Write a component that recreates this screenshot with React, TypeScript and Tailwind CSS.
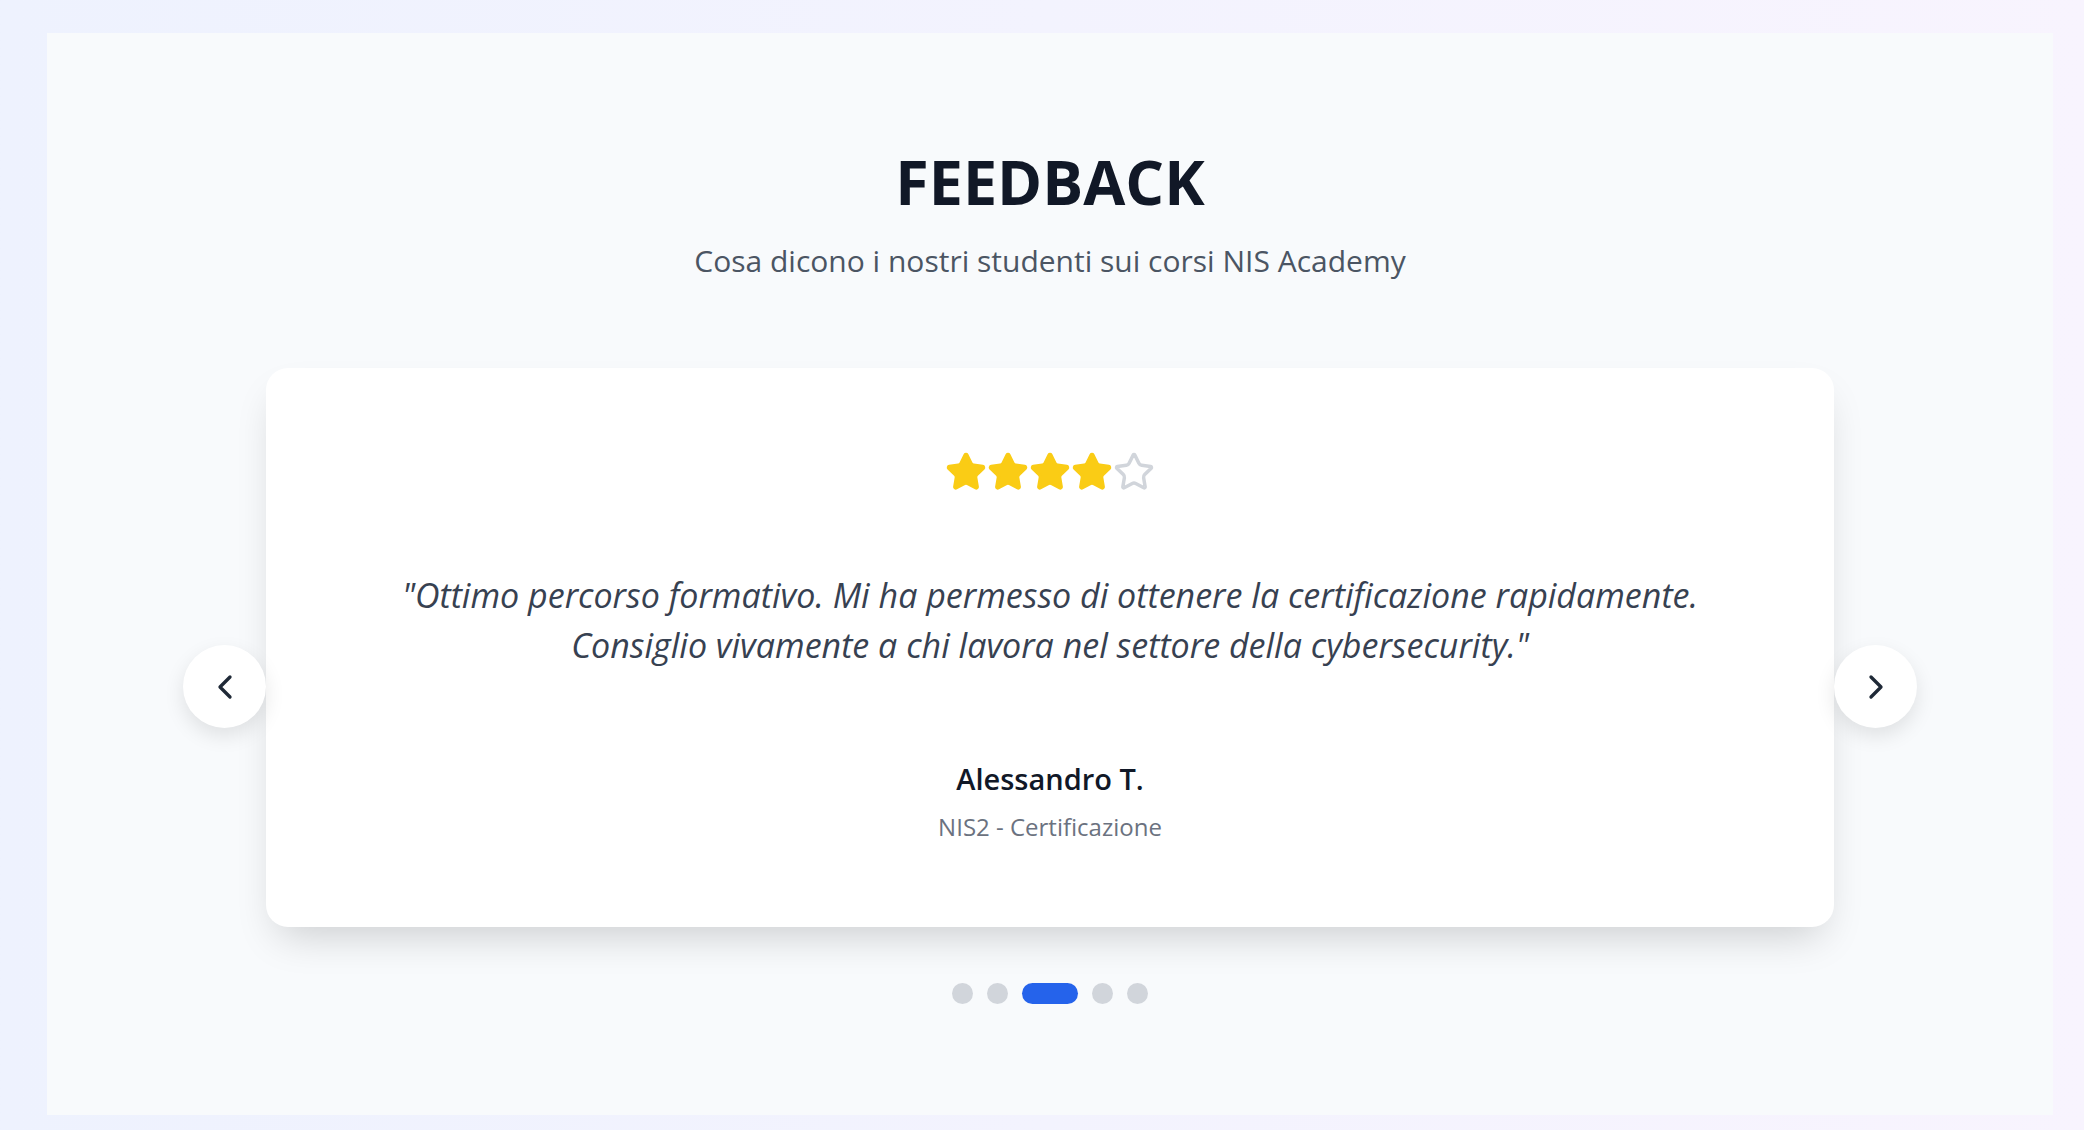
import { ChevronLeft, ChevronRight, Star } from "lucide-react"

const rating = 4
const dots = [0, 1, 2, 3, 4]
const active = 2

export default function App() {
  return (
    <div
      className="min-h-[1130px] w-full bg-gradient-to-r from-[#eef2fe] to-[#f8f4fe] pl-[47px] pr-[31px] pt-[33px] pb-[15px]"
      style={{ fontFamily: '"Open Sans", "Noto Sans", sans-serif' }}
    >
      <div className="h-[1082px] bg-[#f8fafc] flex flex-col items-center">
        {/* header */}
        <h2 className="mt-[107px] text-[61px] leading-[84px] font-bold text-[#111827]">FEEDBACK</h2>
        <p className="mt-[17px] text-[30px] leading-[40px] text-[#4b5563]">Cosa dicono i nostri studenti sui corsi NIS Academy</p>

        {/* carousel */}
        <div className="relative mt-[87px] w-[1568px]">
          <div className="bg-white rounded-[22px] shadow-[0_20px_40px_-12px_rgba(0,0,0,0.18)] h-[559px] flex flex-col items-center pt-[83px]">
            <div className="flex">
              {[1, 2, 3, 4, 5].map((i) => (
                <Star
                  key={i}
                  size={42}
                  strokeWidth={2}
                  className={i <= rating ? "fill-[#facc15] text-[#facc15]" : "text-[#d1d5db]"}
                />
              ))}
            </div>
            <p className="mt-[77px] text-center italic text-[34px] leading-[50px] text-[#374151] px-[100px]">
              "Ottimo percorso formativo. Mi ha permesso di ottenere la certificazione rapidamente.
              <br />
              Consiglio vivamente a chi lavora nel settore della cybersecurity."
            </p>
            <div className="mt-[89px] text-[29px] leading-[40px] font-semibold text-[#111827]">Alessandro T.</div>
            <div className="mt-[12px] text-[24px] leading-[32px] text-[#6b7280]">NIS2 - Certificazione</div>
          </div>

          <div className="flex justify-center items-center gap-[14px] mt-[56px]">
            {dots.map((d) => (
              <button
                key={d}
                className={
                  d === active
                    ? "h-[21px] w-[56px] rounded-full bg-[#2563eb]"
                    : "h-[21px] w-[21px] rounded-full bg-[#d1d5db]"
                }
              />
            ))}
          </div>

          <button className="absolute left-0 top-[277px] -translate-x-full w-[83px] h-[83px] rounded-full bg-white shadow-[0_8px_20px_rgba(0,0,0,0.10)] flex items-center justify-center">
            <ChevronLeft size={40} strokeWidth={2} className="text-[#1f2937]" />
          </button>
          <button className="absolute right-0 top-[277px] translate-x-full w-[83px] h-[83px] rounded-full bg-white shadow-[0_8px_20px_rgba(0,0,0,0.10)] flex items-center justify-center">
            <ChevronRight size={40} strokeWidth={2} className="text-[#1f2937]" />
          </button>
        </div>
      </div>
    </div>
  )
}
